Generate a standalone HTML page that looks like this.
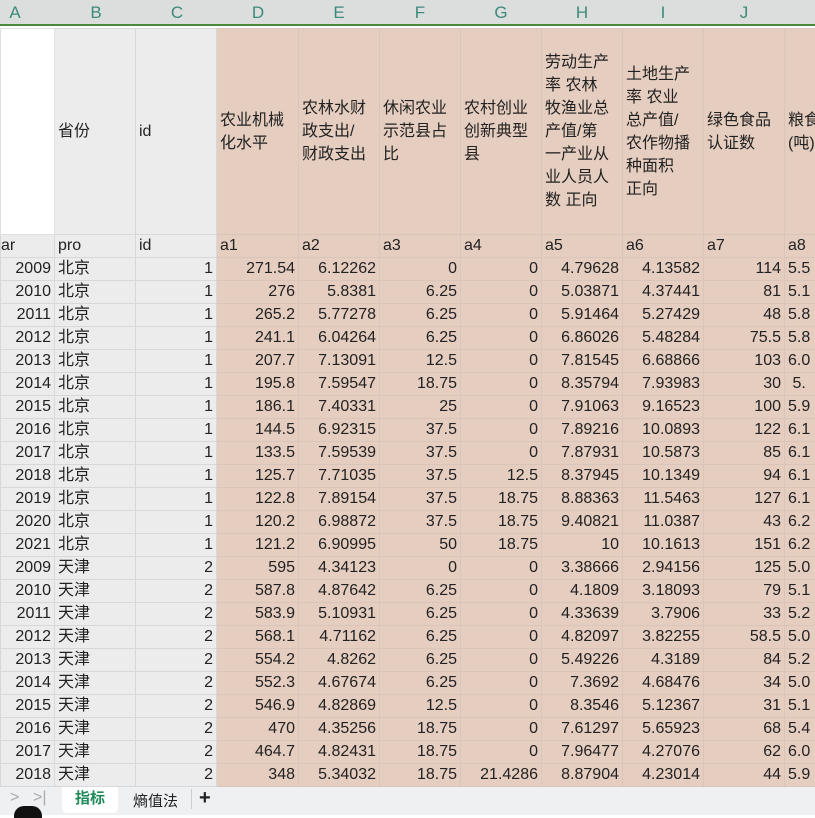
<!DOCTYPE html>
<html><head><meta charset="utf-8"><style>
*{margin:0;padding:0;box-sizing:border-box}
body{width:815px;height:815px;overflow:hidden;background:#fff;font-family:"Liberation Sans","Noto Sans CJK SC",sans-serif;color:#222;position:relative}
#hdr{position:absolute;top:0;left:0;width:815px;height:26px;background:#dcdedd;border-bottom:2px solid #4a8a3a}
#hdr span{position:absolute;top:3px;font-size:17px;color:#3b8a7a;width:60px;text-align:center;margin-left:-30px}
table{position:absolute;top:28px;left:0;width:844px;border-collapse:collapse;table-layout:fixed;font-size:16px}
td{border:1px solid #d8d8d8;height:23px;line-height:22px;padding:0 3px;white-space:nowrap;overflow:hidden;background:#e5cdc0;border-color:#d9c5ba}
td.g{background:#ececec;border-color:#d8d8d8}
td.w{background:#fff;border-color:#e0e0e0}
td.r{text-align:right}
tr.h td{height:206px;vertical-align:middle;line-height:23px;white-space:normal}
#tabs{position:absolute;top:787px;left:0;width:815px;height:28px;background:#eef0f2}
</style></head><body>
<div id="hdr">
<span style="left:15px">A</span><span style="left:96px">B</span><span style="left:177px">C</span><span style="left:258px">D</span><span style="left:339px">E</span><span style="left:420px">F</span><span style="left:501px">G</span><span style="left:582px">H</span><span style="left:663px">I</span><span style="left:744px">J</span>
</div>
<table>
<colgroup><col style="width:54px"><col style="width:81px"><col style="width:81px"><col style="width:82px"><col style="width:81px"><col style="width:81px"><col style="width:81px"><col style="width:81px"><col style="width:81px"><col style="width:81px"><col style="width:60px"></colgroup>
<tr class="h"><td class="w"></td><td class="g">省份</td><td class="g">id</td><td>农业机械<br>化水平</td><td>农林水财<br>政支出/<br>财政支出</td><td>休闲农业<br>示范县占<br>比</td><td>农村创业<br>创新典型<br>县</td><td>劳动生产<br>率 农林<br>牧渔业总<br>产值/第<br>一产业从<br>业人员人<br>数 正向</td><td>土地生产<br>率 农业<br>总产值/<br>农作物播<br>种面积<br>正向</td><td>绿色食品<br>认证数</td><td>粮食<br>(吨)</td></tr>
<tr><td class="g" style="padding-left:0">ar</td><td class="g">pro</td><td class="g">id</td><td>a1</td><td>a2</td><td>a3</td><td>a4</td><td>a5</td><td>a6</td><td>a7</td><td>a8</td></tr>
<tr><td class="g r">2009</td><td class="g">北京</td><td class="g r">1</td><td class="r">271.54</td><td class="r">6.12262</td><td class="r">0</td><td class="r">0</td><td class="r">4.79628</td><td class="r">4.13582</td><td class="r">114</td><td>5.5</td></tr>
<tr><td class="g r">2010</td><td class="g">北京</td><td class="g r">1</td><td class="r">276</td><td class="r">5.8381</td><td class="r">6.25</td><td class="r">0</td><td class="r">5.03871</td><td class="r">4.37441</td><td class="r">81</td><td>5.1</td></tr>
<tr><td class="g r">2011</td><td class="g">北京</td><td class="g r">1</td><td class="r">265.2</td><td class="r">5.77278</td><td class="r">6.25</td><td class="r">0</td><td class="r">5.91464</td><td class="r">5.27429</td><td class="r">48</td><td>5.8</td></tr>
<tr><td class="g r">2012</td><td class="g">北京</td><td class="g r">1</td><td class="r">241.1</td><td class="r">6.04264</td><td class="r">6.25</td><td class="r">0</td><td class="r">6.86026</td><td class="r">5.48284</td><td class="r">75.5</td><td>5.8</td></tr>
<tr><td class="g r">2013</td><td class="g">北京</td><td class="g r">1</td><td class="r">207.7</td><td class="r">7.13091</td><td class="r">12.5</td><td class="r">0</td><td class="r">7.81545</td><td class="r">6.68866</td><td class="r">103</td><td>6.0</td></tr>
<tr><td class="g r">2014</td><td class="g">北京</td><td class="g r">1</td><td class="r">195.8</td><td class="r">7.59547</td><td class="r">18.75</td><td class="r">0</td><td class="r">8.35794</td><td class="r">7.93983</td><td class="r">30</td><td>&nbsp;5.</td></tr>
<tr><td class="g r">2015</td><td class="g">北京</td><td class="g r">1</td><td class="r">186.1</td><td class="r">7.40331</td><td class="r">25</td><td class="r">0</td><td class="r">7.91063</td><td class="r">9.16523</td><td class="r">100</td><td>5.9</td></tr>
<tr><td class="g r">2016</td><td class="g">北京</td><td class="g r">1</td><td class="r">144.5</td><td class="r">6.92315</td><td class="r">37.5</td><td class="r">0</td><td class="r">7.89216</td><td class="r">10.0893</td><td class="r">122</td><td>6.1</td></tr>
<tr><td class="g r">2017</td><td class="g">北京</td><td class="g r">1</td><td class="r">133.5</td><td class="r">7.59539</td><td class="r">37.5</td><td class="r">0</td><td class="r">7.87931</td><td class="r">10.5873</td><td class="r">85</td><td>6.1</td></tr>
<tr><td class="g r">2018</td><td class="g">北京</td><td class="g r">1</td><td class="r">125.7</td><td class="r">7.71035</td><td class="r">37.5</td><td class="r">12.5</td><td class="r">8.37945</td><td class="r">10.1349</td><td class="r">94</td><td>6.1</td></tr>
<tr><td class="g r">2019</td><td class="g">北京</td><td class="g r">1</td><td class="r">122.8</td><td class="r">7.89154</td><td class="r">37.5</td><td class="r">18.75</td><td class="r">8.88363</td><td class="r">11.5463</td><td class="r">127</td><td>6.1</td></tr>
<tr><td class="g r">2020</td><td class="g">北京</td><td class="g r">1</td><td class="r">120.2</td><td class="r">6.98872</td><td class="r">37.5</td><td class="r">18.75</td><td class="r">9.40821</td><td class="r">11.0387</td><td class="r">43</td><td>6.2</td></tr>
<tr><td class="g r">2021</td><td class="g">北京</td><td class="g r">1</td><td class="r">121.2</td><td class="r">6.90995</td><td class="r">50</td><td class="r">18.75</td><td class="r">10</td><td class="r">10.1613</td><td class="r">151</td><td>6.2</td></tr>
<tr><td class="g r">2009</td><td class="g">天津</td><td class="g r">2</td><td class="r">595</td><td class="r">4.34123</td><td class="r">0</td><td class="r">0</td><td class="r">3.38666</td><td class="r">2.94156</td><td class="r">125</td><td>5.0</td></tr>
<tr><td class="g r">2010</td><td class="g">天津</td><td class="g r">2</td><td class="r">587.8</td><td class="r">4.87642</td><td class="r">6.25</td><td class="r">0</td><td class="r">4.1809</td><td class="r">3.18093</td><td class="r">79</td><td>5.1</td></tr>
<tr><td class="g r">2011</td><td class="g">天津</td><td class="g r">2</td><td class="r">583.9</td><td class="r">5.10931</td><td class="r">6.25</td><td class="r">0</td><td class="r">4.33639</td><td class="r">3.7906</td><td class="r">33</td><td>5.2</td></tr>
<tr><td class="g r">2012</td><td class="g">天津</td><td class="g r">2</td><td class="r">568.1</td><td class="r">4.71162</td><td class="r">6.25</td><td class="r">0</td><td class="r">4.82097</td><td class="r">3.82255</td><td class="r">58.5</td><td>5.0</td></tr>
<tr><td class="g r">2013</td><td class="g">天津</td><td class="g r">2</td><td class="r">554.2</td><td class="r">4.8262</td><td class="r">6.25</td><td class="r">0</td><td class="r">5.49226</td><td class="r">4.3189</td><td class="r">84</td><td>5.2</td></tr>
<tr><td class="g r">2014</td><td class="g">天津</td><td class="g r">2</td><td class="r">552.3</td><td class="r">4.67674</td><td class="r">6.25</td><td class="r">0</td><td class="r">7.3692</td><td class="r">4.68476</td><td class="r">34</td><td>5.0</td></tr>
<tr><td class="g r">2015</td><td class="g">天津</td><td class="g r">2</td><td class="r">546.9</td><td class="r">4.82869</td><td class="r">12.5</td><td class="r">0</td><td class="r">8.3546</td><td class="r">5.12367</td><td class="r">31</td><td>5.1</td></tr>
<tr><td class="g r">2016</td><td class="g">天津</td><td class="g r">2</td><td class="r">470</td><td class="r">4.35256</td><td class="r">18.75</td><td class="r">0</td><td class="r">7.61297</td><td class="r">5.65923</td><td class="r">68</td><td>5.4</td></tr>
<tr><td class="g r">2017</td><td class="g">天津</td><td class="g r">2</td><td class="r">464.7</td><td class="r">4.82431</td><td class="r">18.75</td><td class="r">0</td><td class="r">7.96477</td><td class="r">4.27076</td><td class="r">62</td><td>6.0</td></tr>
<tr><td class="g r">2018</td><td class="g">天津</td><td class="g r">2</td><td class="r">348</td><td class="r">5.34032</td><td class="r">18.75</td><td class="r">21.4286</td><td class="r">8.87904</td><td class="r">4.23014</td><td class="r">44</td><td>5.9</td></tr>
</table>
<div id="tabs">
<span style="position:absolute;left:10px;top:2px;color:#aaa;font-size:16px">&gt;</span>
<span style="position:absolute;left:33px;top:2px;color:#aaa;font-size:16px">&gt;|</span>
<div style="position:absolute;left:62px;top:0;width:56px;height:26px;background:#fff;border-radius:0 0 5px 5px;color:#1f8a5a;font-weight:bold;font-size:15px;text-align:center;line-height:24px">指标</div>
<span style="position:absolute;left:133px;top:3px;font-size:15px;color:#222">熵值法</span>
<span style="position:absolute;left:191px;top:2px;width:1px;height:20px;background:#ccc"></span>
<span style="position:absolute;left:199px;top:0px;font-size:20px;font-weight:bold;color:#222">+</span>
<div style="position:absolute;left:14px;top:19px;width:28px;height:12px;background:#111;border-radius:10px 10px 0 0"></div>
</div>
</body></html>
